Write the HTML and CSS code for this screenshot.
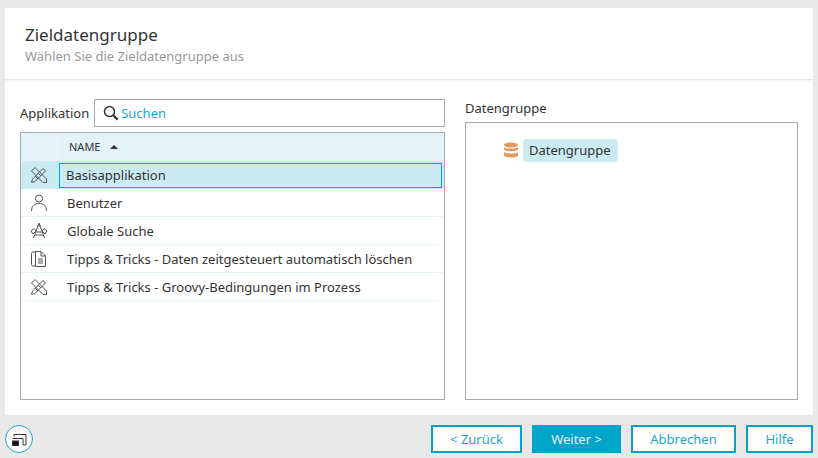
FILE: index.html
```html
<!DOCTYPE html>
<html lang="de">
<head>
    <meta charset="UTF-8">
    <title>Zieldatengruppe</title>
    <link rel="stylesheet" href="styles.css">
</head>
<body>
    <div class="panel">
        <div class="panel-head">
            <h1>Zieldatengruppe</h1>
            <p>Wählen Sie die Zieldatengruppe aus</p>
        </div>
        <div class="panel-body">
            <div class="left-col">
                <div class="search-row">
                    <label>Applikation</label>
                    <div class="search-box">
                        <svg class="search-icon" width="16" height="16" viewBox="0 0 16 16" fill="none" stroke="#333" stroke-width="1.5">
                            <circle cx="6.5" cy="6.5" r="5"/>
                            <path d="M10.2 10.2L14.6 14.6" stroke-width="2.2"/>
                        </svg>
                        <span>Suchen</span>
                    </div>
                </div>
                <div class="table">
                    <div class="table-head">
                        <div class="icon-cell"></div>
                        <div class="head-name">NAME <span class="sort-arrow"></span></div>
                    </div>
                    <div class="row selected">
                        <div class="icon-cell">
                            <svg width="18" height="18" viewBox="0 0 18 18" fill="none" stroke="#555" stroke-width="1">
                                <path d="M2.5 13L13 2.5L15.5 5L5 15.5L1.5 16.5Z"/>
                                <path d="M5 1.5L16.500 13L16.500 16.500L13 16.500L1.500 5Z"/>
                                <path d="M5 10L8 13M8 7L11 10"/>
                            </svg>
                        </div>
                        <div class="name-cell">Basisapplikation</div>
                    </div>
                    <div class="row">
                        <div class="icon-cell">
                            <svg width="18" height="18" viewBox="0 0 18 18" fill="none" stroke="#555" stroke-width="1">
                                <circle cx="9" cy="4.500" r="3.500"/>
                                <path d="M1.500 17C1.500 12 4.500 9.500 9 9.500C13.500 9.500 16.500 12 16.500 17"/>
                            </svg>
                        </div>
                        <div class="name-cell">Benutzer</div>
                    </div>
                    <div class="row">
                        <div class="icon-cell">
                            <svg width="18" height="18" viewBox="0 0 18 18" fill="none" stroke="#555" stroke-width="1">
                                <path d="M9 1L3.500 16M9 1L14.500 16M7 4L11 4M6 10L12 10M5 13L13 13"/>
                                <path d="M1 9L4 6.500L6 9L3 12ZM17 9L14 6.500L12 9L15 12Z"/>
                            </svg>
                        </div>
                        <div class="name-cell">Globale Suche</div>
                    </div>
                    <div class="row">
                        <div class="icon-cell">
                            <svg width="18" height="18" viewBox="0 0 18 18" fill="none" stroke="#555" stroke-width="1">
                                <path d="M6 2L3 2Q1.500 2 1.500 3.500L1.500 14.500Q1.500 16 3 16L5 16"/>
                                <path d="M5.500 16.500L5.500 1.500L11 1.500L15.500 6L15.500 16.500Z"/>
                                <path d="M11 1.500L11 6L15.500 6M8 9L13 9M8 11L13 11M8 13L13 13"/>
                            </svg>
                        </div>
                        <div class="name-cell">Tipps &amp; Tricks - Daten zeitgesteuert automatisch löschen</div>
                    </div>
                    <div class="row">
                        <div class="icon-cell">
                            <svg width="18" height="18" viewBox="0 0 18 18" fill="none" stroke="#555" stroke-width="1">
                                <path d="M2.500 13L13 2.500L15.500 5L5 15.500L1.500 16.500Z"/>
                                <path d="M5 1.500L16.500 13L16.500 16.500L13 16.500L1.500 5Z"/>
                                <path d="M5 10L8 13M8 7L11 10"/>
                            </svg>
                        </div>
                        <div class="name-cell">Tipps &amp; Tricks - Groovy-Bedingungen im Prozess</div>
                    </div>
                </div>
            </div>
            <div class="right-col">
                <div class="right-label">Datengruppe</div>
                <div class="tree">
                    <div class="tree-node">
                        <svg width="16" height="17" viewBox="0 0 16 17" fill="#e09a5e">
                            <ellipse cx="8" cy="3" rx="7" ry="2.500"/>
                            <path d="M1 5.200C2.500 7 13.500 7 15 5.200L15 7.800C13.500 9.800 2.500 9.800 1 7.800Z"/>
                            <path d="M1 10C2.500 12 13.500 12 15 10L15 13.500C14 16.300 2 16.300 1 13.500Z"/>
                        </svg>
                        <span class="tree-label">Datengruppe</span>
                    </div>
                </div>
            </div>
        </div>
    </div>
    <div class="footer">
        <button class="round-btn">
            <svg width="15" height="13" viewBox="0 0 15 13" fill="none" stroke="#333" stroke-width="1">
                <path d="M2 3.500L2 1.500L14 1.500L14 12L11 12"/>
                <path d="M0.500 5.500L11 5.500L11 12"/>
                <rect x="0.500" y="8" width="6" height="4.500" fill="#111"/>
            </svg>
        </button>
        <div class="buttons">
            <button class="btn btn-back">&lt; Zurück</button>
            <button class="btn btn-primary">Weiter &gt;</button>
            <button class="btn btn-cancel">Abbrechen</button>
            <button class="btn btn-help">Hilfe</button>
        </div>
    </div>
</body>
</html>
```

FILE: styles.css
```css
html, body {
    height: 100%;
}
body {
    font-family: "Noto Sans", sans-serif;
    font-size: 13px;
    color: #333;
    background-color: #e9e9e9;
    margin: 0;
    padding: 8px 5px 5px;
    box-sizing: border-box;
    overflow: hidden;
}
.panel {
    background-color: #fff;
    height: 407px;
    display: flex;
    flex-direction: column;
}
.panel-head {
    height: 72px;
    padding: 15px 20px 0;
    box-sizing: border-box;
    border-bottom: 1px solid #e8e8e8;
    box-shadow: 0 1px 2px #eee;
}
.panel-head h1 {
    font-size: 17px;
    font-weight: normal;
    line-height: 23px;
    margin: 0;
    color: #333;
}
.panel-head p {
    font-size: 13px;
    line-height: 18px;
    margin: 1px 0 0;
    color: #999;
}
.panel-body {
    flex: 1;
    display: flex;
    gap: 20px;
    padding: 19px 15px 15px;
}
.left-col {
    width: 425px;
    display: flex;
    flex-direction: column;
    gap: 5px;
}
.search-row {
    display: flex;
    align-items: center;
    height: 28px;
    gap: 5px;
}
.search-box {
    flex: 1;
    height: 28px;
    box-sizing: border-box;
    border: 1px solid #aaa;
    display: flex;
    align-items: center;
    padding-left: 8px;
    gap: 2px;
    color: #1ba5cb;
}
.table {
    flex: 1;
    border: 1px solid #aaa;
}
.table-head {
    display: flex;
    height: 28px;
    background-color: #e4f3f9;
}
.table-head .icon-cell {
    border-right: 1px solid #f0f9fc;
}
.head-name {
    font-size: 11px;
    padding-left: 11px;
    line-height: 28px;
    color: #333;
}
.sort-arrow {
    display: inline-block;
    width: 0;
    height: 0;
    margin-left: 7px;
    vertical-align: 2px;
    border-left: 4px solid transparent;
    border-right: 4px solid transparent;
    border-bottom: 4px solid #333;
}
.icon-cell {
    width: 36px;
    flex-shrink: 0;
    display: flex;
    align-items: center;
    justify-content: center;
}
.row {
    display: flex;
    align-items: center;
    height: 28px;
    box-sizing: border-box;
    border-bottom: 1px solid #e4f3f9;
}
.row.selected {
    background-color: #cbebf3;
    border-bottom: none;
}
.name-cell {
    flex: 1;
    padding-left: 10px;
}
.row.selected .name-cell {
    height: 25px;
    line-height: 23px;
    margin: 0 2px 0 2px;
    padding-left: 6px;
    box-sizing: border-box;
    border: 1px solid #00a5c9;
    background-color: #cbebf3;
}
.right-col {
    flex: 1;
    display: flex;
    flex-direction: column;
    gap: 4px;
}
.right-label {
    height: 19px;
    line-height: 19px;
}
.tree {
    flex: 1;
    border: 1px solid #aaa;
    padding: 16px 37px;
}
.tree-node {
    display: flex;
    align-items: center;
    gap: 4px;
}
.tree-label {
    background-color: #cbebf3;
    border-radius: 4px;
    padding: 0 7px 0 6px;
    line-height: 23px;
}
.footer {
    display: flex;
    justify-content: space-between;
    margin-top: 10px;
}
.round-btn {
    width: 28px;
    height: 28px;
    border: 1px solid #1ba5cb;
    border-radius: 50%;
    background-color: #fff;
    padding: 0;
    display: flex;
    align-items: center;
    justify-content: center;
}
.buttons {
    display: flex;
    gap: 10px;
}
.btn {
    font-family: "Noto Sans", sans-serif;
    font-size: 13px;
    height: 28px;
    box-sizing: border-box;
    border: 2px solid #00a5c9;
    background-color: #fff;
    color: #1ba5cb;
    padding: 0;
}
.btn-back { width: 91px; }
.btn-primary {
    width: 89px;
    background-color: #00a5c9;
    color: #e4f3f9;
}
.btn-cancel { width: 105px; }
.btn-help { width: 67px; }
```
